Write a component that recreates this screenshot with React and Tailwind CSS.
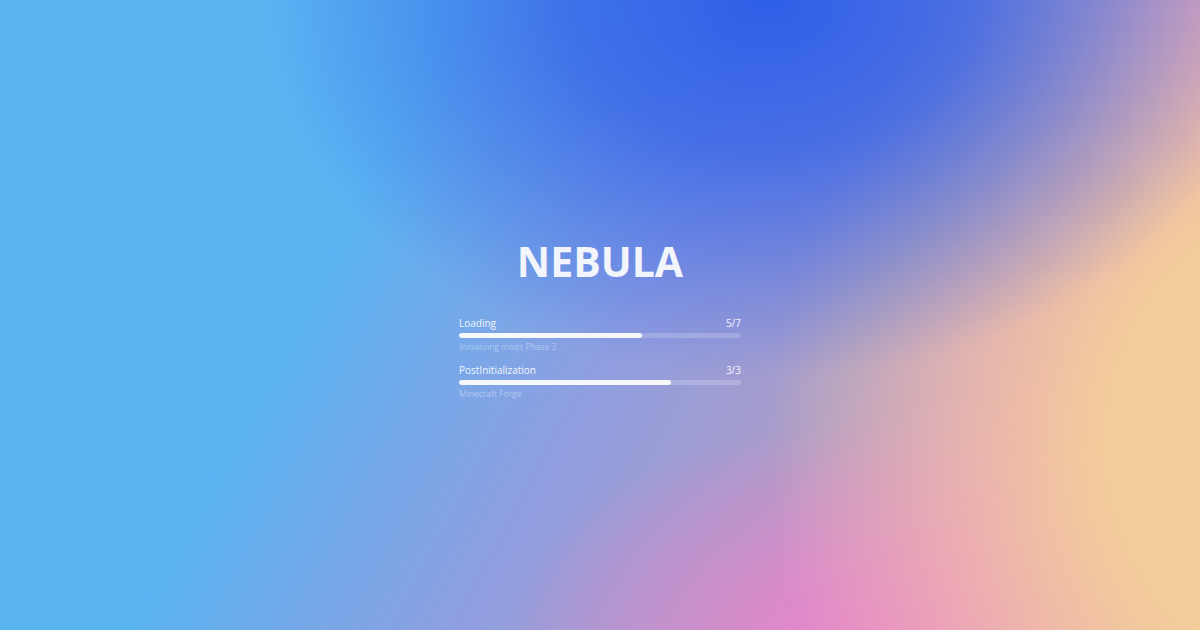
export default function App() {
  const bars = [
    { label: "Loading", count: "5/7", pct: 65, sub: "Initializing mods Phase 3" },
    { label: "PostInitialization", count: "3/3", pct: 75, sub: "Minecraft Forge" },
  ];
  return (
    <div className="relative w-[1200px] h-[630px] overflow-hidden flex flex-col items-center justify-center font-['Open_Sans','Noto_Sans',sans-serif] bg-[radial-gradient(ellipse_42%_60%_at_64%_0%,#2f5fe8_0%,rgba(47,95,232,0.75)_40%,rgba(47,95,232,0)_100%),radial-gradient(ellipse_48%_95%_at_112%_70%,#f3cd9a_0%,#f3cd9a_40%,rgba(243,205,154,0)_100%),radial-gradient(ellipse_30%_35%_at_72%_102%,#e884cc_0%,rgba(232,132,204,0.5)_50%,rgba(232,132,204,0)_100%),linear-gradient(118deg,#5ab4f2_0%,#5ab4f2_30%,#8f9ee0_52%,#ac9cc8_68%,#e08ccc_82%,#f0b0b0_100%)]">
      <div className="flex flex-col items-center mt-[6px]">
        <h1 className="text-[41px] leading-[48px] font-bold text-[#f3f5fc]">NEBULA</h1>
        <div className="mt-[31px] w-[282px] flex flex-col gap-[10px]">
          {bars.map((b) => (
            <div key={b.label} className="flex flex-col">
              <div className="flex justify-between text-[10px] leading-[14px] text-white/90">
                <span>{b.label}</span>
                <span>{b.count}</span>
              </div>
              <div className="mt-[3px] h-[5px] rounded-full bg-white/20 overflow-hidden">
                <div className="h-full rounded-full bg-white/90" style={{ width: `${b.pct}%` }} />
              </div>
              <div className="mt-[3px] text-[8.5px] leading-[12px] text-white/40">{b.sub}</div>
            </div>
          ))}
        </div>
      </div>
    </div>
  );
}
